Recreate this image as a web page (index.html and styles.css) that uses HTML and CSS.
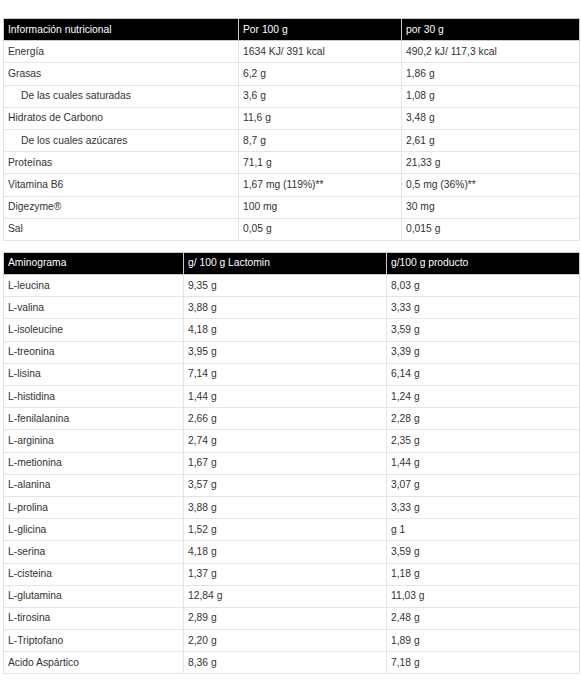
FILE: index.html
```html
<!DOCTYPE html>
<html lang="es">
<head>
<meta charset="utf-8">
<link rel="stylesheet" href="styles.css">
</head>
<body>
<div class="page">
<table class="nt nt-info">
  <colgroup><col class="c1"><col class="c2"><col class="c3"></colgroup>
  <thead><tr><th>Información nutricional</th><th>Por 100 g</th><th>por 30 g</th></tr></thead>
  <tbody>
    <tr><td>Energía</td><td>1634 KJ/ 391 kcal</td><td>490,2 kJ/ 117,3 kcal</td></tr>
    <tr><td>Grasas</td><td>6,2 g</td><td>1,86 g</td></tr>
    <tr><td class="sub">De las cuales saturadas</td><td>3,6 g</td><td>1,08 g</td></tr>
    <tr><td>Hidratos de Carbono</td><td>11,6 g</td><td>3,48 g</td></tr>
    <tr><td class="sub">De los cuales azúcares</td><td>8,7 g</td><td>2,61 g</td></tr>
    <tr><td>Proteínas</td><td>71,1 g</td><td>21,33 g</td></tr>
    <tr><td>Vitamina B6</td><td>1,67 mg (119%)**</td><td>0,5 mg (36%)**</td></tr>
    <tr><td>Digezyme®</td><td>100 mg</td><td>30 mg</td></tr>
    <tr><td>Sal</td><td>0,05 g</td><td>0,015 g</td></tr>
  </tbody>
</table>
<table class="nt nt-amino">
  <colgroup><col class="c1"><col class="c2"><col class="c3"></colgroup>
  <thead><tr><th>Aminograma</th><th>g/ 100 g Lactomin</th><th>g/100 g producto</th></tr></thead>
  <tbody>
    <tr><td>L-leucina</td><td>9,35 g</td><td>8,03 g</td></tr>
    <tr><td>L-valina</td><td>3,88 g</td><td>3,33 g</td></tr>
    <tr><td>L-isoleucine</td><td>4,18 g</td><td>3,59 g</td></tr>
    <tr><td>L-treonina</td><td>3,95 g</td><td>3,39 g</td></tr>
    <tr><td>L-lisina</td><td>7,14 g</td><td>6,14 g</td></tr>
    <tr><td>L-histidina</td><td>1,44 g</td><td>1,24 g</td></tr>
    <tr><td>L-fenilalanina</td><td>2,66 g</td><td>2,28 g</td></tr>
    <tr><td>L-arginina</td><td>2,74 g</td><td>2,35 g</td></tr>
    <tr><td>L-metionina</td><td>1,67 g</td><td>1,44 g</td></tr>
    <tr><td>L-alanina</td><td>3,57 g</td><td>3,07 g</td></tr>
    <tr><td>L-prolina</td><td>3,88 g</td><td>3,33 g</td></tr>
    <tr><td>L-glicina</td><td>1,52 g</td><td>g 1</td></tr>
    <tr><td>L-serina</td><td>4,18 g</td><td>3,59 g</td></tr>
    <tr><td>L-cisteina</td><td>1,37 g</td><td>1,18 g</td></tr>
    <tr><td>L-glutamina</td><td>12,84 g</td><td>11,03 g</td></tr>
    <tr><td>L-tirosina</td><td>2,89 g</td><td>2,48 g</td></tr>
    <tr><td>L-Triptofano</td><td>2,20 g</td><td>1,89 g</td></tr>
    <tr><td>Acido Aspártico</td><td>8,36 g</td><td>7,18 g</td></tr>
  </tbody>
</table>
</div>
</body>
</html>
```
FILE: styles.css
```css
html, body {
  margin: 0;
  padding: 0;
  background: #fff;
}
.page {
  padding: 18px 2px 0 3px;
  display: flex;
  flex-direction: column;
  gap: 11px;
}
.nt {
  width: 576px;
  border-collapse: collapse;
  table-layout: fixed;
  font-family: "Liberation Sans", Arial, sans-serif;
  font-size: 10.3px;
  color: #333;
}
.nt th, .nt td {
  border: 1px solid #e3e5e9;
  height: 22.2px;
  box-sizing: border-box;
  padding: 0 4px;
  text-align: left;
  vertical-align: middle;
  line-height: 12px;
  white-space: nowrap;
}
.nt th {
  background: #000;
  color: #fff;
  font-weight: normal;
  border-color: #c9cbce;
}
.nt td.sub {
  padding-left: 17px;
}
.nt-info .c1 { width: 235px; }
.nt-info .c2 { width: 163px; }
.nt-info .c3 { width: 178px; }
.nt-amino .c1 { width: 180px; }
.nt-amino .c2 { width: 203px; }
.nt-amino .c3 { width: 193px; }
```
